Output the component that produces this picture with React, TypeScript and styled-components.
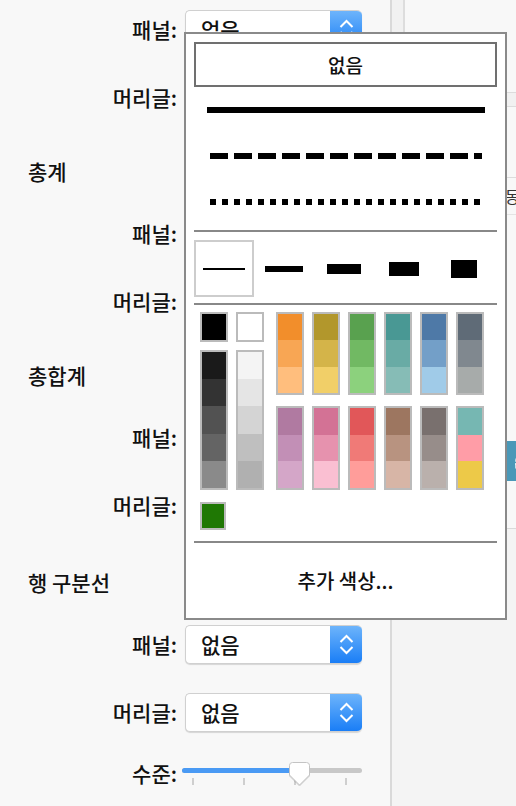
import React from "react";
import styled, { createGlobalStyle } from "styled-components";
import { RefreshCw } from "lucide-react";

const Global = createGlobalStyle`
  html, body { margin: 0; padding: 0; }
  body {
    background: #f8f8f8;
    font-family: "Noto Sans CJK KR", "Noto Sans", sans-serif;
    color: #111;
  }
  #root { width: 516px; height: 806px; }
`;

const Page = styled.div`
  position: relative;
  width: 516px;
  height: 806px;
  overflow: hidden;
  display: flex;
  background: #f8f8f8;
`;

const Sidebar = styled.div`
  width: 390px;
  flex: none;
  display: flex;
  flex-direction: column;
  padding-top: 9px;
  box-sizing: border-box;
`;

const FieldRow = styled.div<{ $top: number }>`
  display: flex;
  align-items: center;
  gap: 8px;
  height: 40px;
  margin-top: ${(p) => p.$top}px;
`;

const Label = styled.div`
  width: 177px;
  text-align: right;
  font-size: 21px;
  font-weight: 500;
  line-height: 24px;
  color: #111;
  white-space: nowrap;
`;

const SectionTitle = styled.div<{ $top: number }>`
  margin-top: ${(p) => p.$top}px;
  padding-left: 28px;
  font-size: 21px;
  font-weight: 500;
  line-height: 24px;
  color: #111;
`;

const Select = styled.div`
  width: 177px;
  height: 39px;
  box-sizing: border-box;
  display: flex;
  background: #fff;
  border: 1px solid #d0d0d0;
  border-right: none;
  border-radius: 5px;
  box-shadow: 0 1px 1px rgba(0, 0, 0, 0.14);
  overflow: hidden;
`;

const SelectText = styled.div`
  flex: 1;
  padding-left: 15px;
  font-size: 21px;
  font-weight: 500;
  line-height: 37px;
  color: #111;
`;

const Stepper = styled.div`
  width: 32px;
  background: linear-gradient(#6db4fb, #1a7ef6);
  display: flex;
  align-items: center;
  justify-content: center;
`;

const SliderRow = styled.div`
  display: flex;
  align-items: flex-start;
  gap: 5px;
  height: 30px;
  margin-top: 26px;
`;

const SliderLabel = styled(Label)`
  padding-top: 3px;
`;

const SliderBox = styled.div`
  position: relative;
  width: 180px;
  height: 30px;
  display: flex;
  flex-direction: column;
`;

const Track = styled.div`
  margin-top: 10px;
  height: 5px;
  border-radius: 3px;
  background: #c8c8c8;
  display: flex;
  overflow: hidden;
`;

const TrackFill = styled.div`
  background: #4a9af4;
  height: 100%;
`;

const Ticks = styled.div`
  margin-top: 5px;
  height: 7px;
  display: flex;
  justify-content: space-between;
  padding: 0 15px 0 10px;
`;

const Tick = styled.div`
  width: 2px;
  height: 7px;
  background: #cfcfcf;
`;

const Knob = styled.svg`
  position: absolute;
  left: 107px;
  top: 4px;
  filter: drop-shadow(0 1px 0.5px rgba(0, 0, 0, 0.15));
`;

/* right pane */
const RightPane = styled.div`
  flex: 1;
  display: flex;
  flex-direction: column;
  border-left: 2px solid #d9d9d9;
`;

const RightTop = styled.div`
  height: 528px;
  flex: none;
  display: flex;
`;

const Strip = styled.div`
  width: 11px;
  background: #f1f1f1;
  border-right: 2px solid #dddddd;
`;

const Inspector = styled.div`
  flex: 1;
  background: #f8f8f8;
  display: flex;
  flex-direction: column;
  padding-top: 92px;
  overflow: hidden;
`;

const Band = styled.div`
  height: 13px;
  background: #f1f1f1;
  border-top: 1px solid #dcdcdc;
  border-bottom: 1px solid #dcdcdc;
`;

const InspectorRow = styled.div`
  margin-top: 70px;
  height: 36px;
  border-top: 1px solid #dcdcdc;
  border-bottom: 1px solid #e4e4e4;
  padding-left: 100px;
  font-size: 16px;
  line-height: 36px;
  color: #333;
  white-space: nowrap;
`;

const TealButton = styled.div`
  margin-top: 226px;
  margin-left: 96px;
  width: 44px;
  height: 40px;
  flex: none;
  border-radius: 4px;
  background: #4a98b8;
  display: flex;
  align-items: center;
  justify-content: center;
  color: #fff;
`;

const RightBottom = styled.div`
  flex: 1;
  background: #f4f4f4;
  border-top: 1px solid #dadada;
`;

/* popover */
const Popover = styled.div`
  position: absolute;
  left: 184px;
  top: 32px;
  width: 323px;
  height: 588px;
  box-sizing: border-box;
  border: 2px solid #8a8a8a;
  background: #fff;
  padding: 8px 8px 0 8px;
  display: flex;
  flex-direction: column;
  z-index: 10;
`;

const NoneButton = styled.div`
  height: 45px;
  flex: none;
  box-sizing: border-box;
  border: 2px solid #707070;
  display: flex;
  align-items: center;
  justify-content: center;
  font-size: 19px;
  font-weight: 500;
  color: #111;
`;

const LineRow = styled.div`
  height: 46px;
  flex: none;
  display: flex;
  align-items: center;
`;

const StyleLine = styled.div<{ $kind: "solid" | "dash" | "dot"; $left: number; $w: number }>`
  margin-left: ${(p) => p.$left}px;
  width: ${(p) => p.$w}px;
  height: 6px;
  background: ${(p) =>
    p.$kind === "solid"
      ? "#000"
      : p.$kind === "dash"
      ? "repeating-linear-gradient(90deg, #000 0 18px, transparent 18px 24px)"
      : "repeating-linear-gradient(90deg, #000 0 6px, transparent 6px 12px)"};
`;

const Separator = styled.div<{ $top: number }>`
  margin-top: ${(p) => p.$top}px;
  height: 2px;
  flex: none;
  background: #888;
`;

const ThicknessRow = styled.div`
  margin-top: 8px;
  height: 57px;
  flex: none;
  display: flex;
`;

const ThicknessCell = styled.div<{ $selected?: boolean }>`
  width: 60px;
  height: 57px;
  box-sizing: border-box;
  border: 2px solid ${(p) => (p.$selected ? "#cdcdcd" : "transparent")};
  display: flex;
  align-items: center;
  justify-content: center;
`;

const ThicknessBar = styled.div<{ $w: number; $h: number }>`
  width: ${(p) => p.$w}px;
  height: ${(p) => p.$h}px;
  background: #000;
`;

const ColorArea = styled.div`
  margin-top: 7px;
  margin-left: 6px;
  display: flex;
  gap: 12px;
  flex: none;
`;

const BaseGrid = styled.div`
  display: grid;
  grid-template-columns: 28px 28px;
  grid-template-rows: 30px 140px;
  column-gap: 8px;
  row-gap: 8px;
`;

const HueGrid = styled.div`
  display: grid;
  grid-template-columns: repeat(6, 28px);
  grid-template-rows: 83px 84px;
  column-gap: 8px;
  row-gap: 11px;
`;

const Swatch = styled.div`
  box-sizing: border-box;
  border: 2px solid #bbbbbb;
  display: flex;
  flex-direction: column;
`;

const Segment = styled.div<{ $c: string }>`
  flex: 1;
  background: ${(p) => p.$c};
`;

const CustomSwatch = styled(Swatch)`
  margin-top: 12px;
  margin-left: 6px;
  width: 26px;
  height: 28px;
  flex: none;
`;

const MoreColors = styled.div`
  flex: 1;
  display: flex;
  align-items: center;
  justify-content: center;
  font-size: 20px;
  font-weight: 500;
  color: #111;
`;

const Chevrons = () => (
  <svg width="15" height="22" viewBox="0 0 15 22">
    <polyline points="1.5,9 7.5,3 13.5,9" fill="none" stroke="#fff" strokeWidth="2" />
    <polyline points="1.5,14 7.5,20 13.5,14" fill="none" stroke="#fff" strokeWidth="2" />
  </svg>
);

const Dropdown = ({ value }: { value: string }) => (
  <Select>
    <SelectText>{value}</SelectText>
    <Stepper>
      <Chevrons />
    </Stepper>
  </Select>
);

const Field = ({ label, top }: { label: string; top: number }) => (
  <FieldRow $top={top}>
    <Label>{label}</Label>
    <Dropdown value="없음" />
  </FieldRow>
);

const hueTop: string[][] = [
  ["#f28e2b", "#f8a654", "#ffbe7d"],
  ["#b2972c", "#d4b449", "#f1cf68"],
  ["#59a14f", "#71b963", "#8cd17d"],
  ["#499894", "#69aba5", "#86bcb6"],
  ["#4e79a7", "#739fc8", "#a0cbe8"],
  ["#5f6b77", "#80888f", "#a7abaa"],
];

const hueBottom: string[][] = [
  ["#b07aa1", "#c28fb6", "#d4a6c8"],
  ["#d37295", "#e692ae", "#fabfd2"],
  ["#e15759", "#f07a77", "#ff9d9a"],
  ["#9d7660", "#b89380", "#d7b5a6"],
  ["#79706e", "#978d8a", "#bab0ac"],
  ["#76b7b2", "#ff9da7", "#edc948"],
];

const grays = ["#1a1a1a", "#333333", "#525252", "#646464", "#8a8a8a"];
const lights = ["#f4f4f4", "#e5e5e5", "#d4d4d4", "#bfbfbf", "#b0b0b0"];

const thickness = [
  { w: 42, h: 2 },
  { w: 38, h: 6 },
  { w: 34, h: 10 },
  { w: 30, h: 14 },
  { w: 26, h: 18 },
];

export default function App() {
  const fill = 116;
  return (
    <>
      <Global />
      <Page>
        <Sidebar>
          <Field label="패널:" top={0} />
          <Field label="머리글:" top={28} />
          <SectionTitle $top={42}>총계</SectionTitle>
          <Field label="패널:" top={30} />
          <Field label="머리글:" top={28} />
          <SectionTitle $top={42}>총합계</SectionTitle>
          <Field label="패널:" top={30} />
          <Field label="머리글:" top={28} />
          <SectionTitle $top={45}>행 구분선</SectionTitle>
          <Field label="패널:" top={30} />
          <Field label="머리글:" top={28} />
          <SliderRow>
            <SliderLabel>수준:</SliderLabel>
            <SliderBox>
              <Track>
                <TrackFill style={{ width: fill }} />
              </Track>
              <Ticks>
                <Tick />
                <Tick />
                <Tick />
                <Tick />
              </Ticks>
              <Knob width="21" height="24" viewBox="0 0 21 24">
                <path
                  d="M3.5 0.5 H17.5 Q20.5 0.5 20.5 3.5 V13 L10.5 23 L0.5 13 V3.5 Q0.5 0.5 3.5 0.5 Z"
                  fill="#fff"
                  stroke="#c4c4c4"
                  strokeWidth="1"
                />
              </Knob>
            </SliderBox>
          </SliderRow>
        </Sidebar>

        <RightPane>
          <RightTop>
            <Strip />
            <Inspector>
              <Band />
              <InspectorRow>동등</InspectorRow>
              <TealButton>
                <RefreshCw size={18} strokeWidth={2.5} />
              </TealButton>
            </Inspector>
          </RightTop>
          <RightBottom />
        </RightPane>

        <Popover>
          <NoneButton>없음</NoneButton>
          <LineRow>
            <StyleLine $kind="solid" $left={13} $w={278} />
          </LineRow>
          <LineRow>
            <StyleLine $kind="dash" $left={16} $w={272} />
          </LineRow>
          <LineRow>
            <StyleLine $kind="dot" $left={16} $w={270} />
          </LineRow>
          <Separator $top={5} />
          <ThicknessRow>
            {thickness.map((t, i) => (
              <ThicknessCell key={i} $selected={i === 0}>
                <ThicknessBar $w={t.w} $h={t.h} />
              </ThicknessCell>
            ))}
          </ThicknessRow>
          <Separator $top={6} />
          <ColorArea>
            <BaseGrid>
              <Swatch>
                <Segment $c="#000" />
              </Swatch>
              <Swatch>
                <Segment $c="#fff" />
              </Swatch>
              <Swatch>
                {grays.map((c) => (
                  <Segment key={c} $c={c} />
                ))}
              </Swatch>
              <Swatch>
                {lights.map((c) => (
                  <Segment key={c} $c={c} />
                ))}
              </Swatch>
            </BaseGrid>
            <HueGrid>
              {[...hueTop, ...hueBottom].map((col, i) => (
                <Swatch key={i}>
                  {col.map((c) => (
                    <Segment key={c} $c={c} />
                  ))}
                </Swatch>
              ))}
            </HueGrid>
          </ColorArea>
          <CustomSwatch>
            <Segment $c="#1f7804" />
          </CustomSwatch>
          <Separator $top={11} />
          <MoreColors>추가 색상...</MoreColors>
        </Popover>
      </Page>
    </>
  );
}
